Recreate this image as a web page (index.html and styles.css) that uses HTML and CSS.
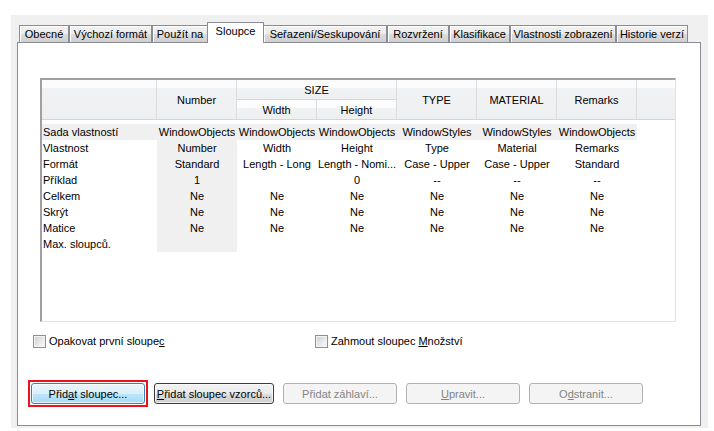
FILE: index.html
```html
<!DOCTYPE html>
<html lang="cs">
<head>
    <meta charset="UTF-8">
    <title>Sloupce</title>
    <link rel="stylesheet" href="styles.css">
</head>
<body>

    <div class="dialog">
        <div class="tabs">
            <div class="tab t-general">Obecné</div>
            <div class="tab t-format">Výchozí formát</div>
            <div class="tab t-apply">Použít na</div>
            <div class="tab t-columns active">Sloupce</div>
            <div class="tab t-sort">Seřazení/Seskupování</div>
            <div class="tab t-layout">Rozvržení</div>
            <div class="tab t-class">Klasifikace</div>
            <div class="tab t-display">Vlastnosti zobrazení</div>
            <div class="tab t-history">Historie verzí</div>
        </div>

        <div class="panel">
            <div class="grid">
                <table>
                    <colgroup>
                        <col class="c-label">
                        <col class="c-val"><col class="c-val"><col class="c-val">
                        <col class="c-val"><col class="c-val"><col class="c-val">
                        <col class="c-fill">
                    </colgroup>
                    <thead>
                        <tr>
                            <th rowspan="2"></th>
                            <th rowspan="2">Number</th>
                            <th colspan="2">SIZE</th>
                            <th rowspan="2">TYPE</th>
                            <th rowspan="2">MATERIAL</th>
                            <th rowspan="2">Remarks</th>
                            <th rowspan="2" class="fill"></th>
                        </tr>
                        <tr>
                            <th>Width</th>
                            <th>Height</th>
                        </tr>
                    </thead>
                    <tbody>
                        <tr class="set">
                            <td class="label">Sada vlastností</td>
                            <td>WindowObjects</td><td>WindowObjects</td><td>WindowObjects</td>
                            <td>WindowStyles</td><td>WindowStyles</td><td>WindowObjects</td>
                            <td class="fill"></td>
                        </tr>
                        <tr>
                            <td class="label">Vlastnost</td>
                            <td class="num">Number</td><td>Width</td><td>Height</td>
                            <td>Type</td><td>Material</td><td>Remarks</td>
                            <td class="fill"></td>
                        </tr>
                        <tr>
                            <td class="label">Formát</td>
                            <td class="num">Standard</td><td>Length - Long</td><td>Length - Nomi...</td>
                            <td>Case - Upper</td><td>Case - Upper</td><td>Standard</td>
                            <td class="fill"></td>
                        </tr>
                        <tr>
                            <td class="label">Příklad</td>
                            <td class="num">1</td><td></td><td>0</td>
                            <td>--</td><td>--</td><td>--</td>
                            <td class="fill"></td>
                        </tr>
                        <tr>
                            <td class="label">Celkem</td>
                            <td class="num">Ne</td><td>Ne</td><td>Ne</td>
                            <td>Ne</td><td>Ne</td><td>Ne</td>
                            <td class="fill"></td>
                        </tr>
                        <tr>
                            <td class="label">Skrýt</td>
                            <td class="num">Ne</td><td>Ne</td><td>Ne</td>
                            <td>Ne</td><td>Ne</td><td>Ne</td>
                            <td class="fill"></td>
                        </tr>
                        <tr>
                            <td class="label">Matice</td>
                            <td class="num">Ne</td><td>Ne</td><td>Ne</td>
                            <td>Ne</td><td>Ne</td><td>Ne</td>
                            <td class="fill"></td>
                        </tr>
                        <tr>
                            <td class="label">Max. sloupců.</td>
                            <td class="num"></td><td></td><td></td>
                            <td></td><td></td><td></td>
                            <td class="fill"></td>
                        </tr>
                    </tbody>
                </table>
            </div>

            <div class="checks">
                <label class="check first"><span class="box"></span><span>Opakovat první sloupe<u>c</u></span></label>
                <label class="check"><span class="box"></span><span>Zahmout sloupec <u>M</u>nožství</span></label>
            </div>

            <div class="buttons">
                <div class="focus-ring">
                    <button class="btn hot">Přid<u>a</u>t sloupec...</button>
                </div>
                <button class="btn default wide"><u>P</u>řidat sloupec vzorců...</button>
                <button class="btn gap" disabled>Přidat záhlaví...</button>
                <button class="btn gap" disabled><u>U</u>pravit...</button>
                <button class="btn gap" disabled>O<u>d</u>stranit...</button>
            </div>
        </div>
    </div>

</body>
</html>
```

FILE: styles.css
```css
body {
    margin: 0;
    background: #fff;
    font-family: "Liberation Sans", Arial, sans-serif;
    font-size: 11px;
    color: #000;
}
.dialog {
    margin: 15px 0 0 11px;
    width: 697px;
    height: 413px;
    background: #f0f0f0;
    padding: 7px 0 0 6px;
    box-sizing: border-box;
}

/* Tabs */
.tabs {
    display: flex;
    align-items: flex-end;
    height: 20px;
    margin-left: 2px;
}
.tab {
    box-sizing: border-box;
    height: 17px;
    line-height: 16px;
    text-align: center;
    border: 1px solid #898c95;
    border-bottom: none;
    background: linear-gradient(#f2f2f2, #ebebeb 50%, #dddddd 50%, #cfcfcf);
    box-shadow: inset 1px 1px 0 #fff;
    white-space: nowrap;
}
.t-general { width: 50px; }
.t-format { width: 83px; }
.t-apply { width: 56px; }
.t-columns { width: 55px; }
.t-sort { width: 124px; }
.t-layout { width: 62px; }
.t-class { width: 61px; }
.t-display { width: 106px; }
.t-history { width: 72px; }
.tab.active {
    position: relative;
    height: 21px;
    line-height: 16px;
    width: 57px;
    margin: 0 -1px -1px -1px;
    background: #fff;
    box-shadow: none;
    z-index: 1;
}

/* Panel */
.panel {
    width: 684px;
    height: 384px;
    box-sizing: border-box;
    border: 1px solid #898c95;
    background: #fff;
    padding: 35px 0 0 22px;
}

/* Grid */
.grid {
    width: 636px;
    height: 244px;
    box-sizing: border-box;
    border-top: 2px solid #a0a0a0;
    border-left: 2px solid #a0a0a0;
    border-right: 1px solid #e3e3e3;
    border-bottom: 1px solid #e3e3e3;
    overflow: hidden;
}
table {
    table-layout: fixed;
    width: 633px;
    border-collapse: separate;
    border-spacing: 0;
}
.c-label { width: 115px; }
.c-val { width: 80px; }
.c-fill { width: 38px; }

th {
    height: 19px;
    padding: 0;
    font-weight: normal;
    text-align: center;
    background: linear-gradient(#fcfcfc 0, #fcfcfc 8px, #f1f2f3 8px, #eeeff0);
    border-right: 1px solid #dcdcdc;
    border-bottom: 1px solid #d5d5d5;
    white-space: nowrap;
}
th.fill { border-right: none; }

td {
    height: 16px;
    line-height: 16px;
    padding: 0;
    text-align: center;
    white-space: nowrap;
    overflow: hidden;
}
td.label {
    text-align: left;
    padding-left: 1px;
}
td.num { background: #f0f0f0; }
.set td {
    background: #f0f0f0;
    border-top: 4px solid #fff;
}
.set td.fill { background: #fff; }

/* Checkboxes */
.checks {
    display: flex;
    margin: 13px 0 0 -7px;
    height: 13px;
}
.check {
    display: flex;
    align-items: center;
    line-height: 13px;
}
.check.first { width: 282px; }
.box {
    width: 11px;
    height: 11px;
    margin-right: 3px;
    border: 1px solid #8e8f8f;
    background: linear-gradient(135deg, #c9cdd3, #eff0f1 70%, #f7f7f7);
    box-shadow: inset 0 0 0 1px #f4f4f4;
}

/* Buttons */
.buttons {
    display: flex;
    align-items: center;
    margin: 32px 0 0 -12px;
}
.focus-ring {
    border: 2px solid #e8141b;
    padding: 1px;
    margin-right: 6px;
}
.btn {
    width: 114px;
    height: 21px;
    padding: 0;
    border: 1px solid #707070;
    border-radius: 3px;
    font-family: "Liberation Sans", Arial, sans-serif;
    font-size: 11px;
    color: #000;
    background: linear-gradient(#f2f2f2, #ebebeb 50%, #dddddd 50%, #cfcfcf);
    box-shadow: inset 0 0 0 1px rgba(255, 255, 255, 0.7);
}
.btn.hot {
    display: block;
    border-color: #3c7fb1;
    background: linear-gradient(#eaf6fd, #d9f0fc 50%, #bee6fd 50%, #a7d9f5);
}
.btn.default { border-color: #3c3c3c; }
.btn.wide { width: 120px; }
.btn.gap { margin-left: 9px; }
.btn:disabled {
    border-color: #adb2b5;
    background: #f4f4f4;
    color: #838383;
    box-shadow: none;
}
```
